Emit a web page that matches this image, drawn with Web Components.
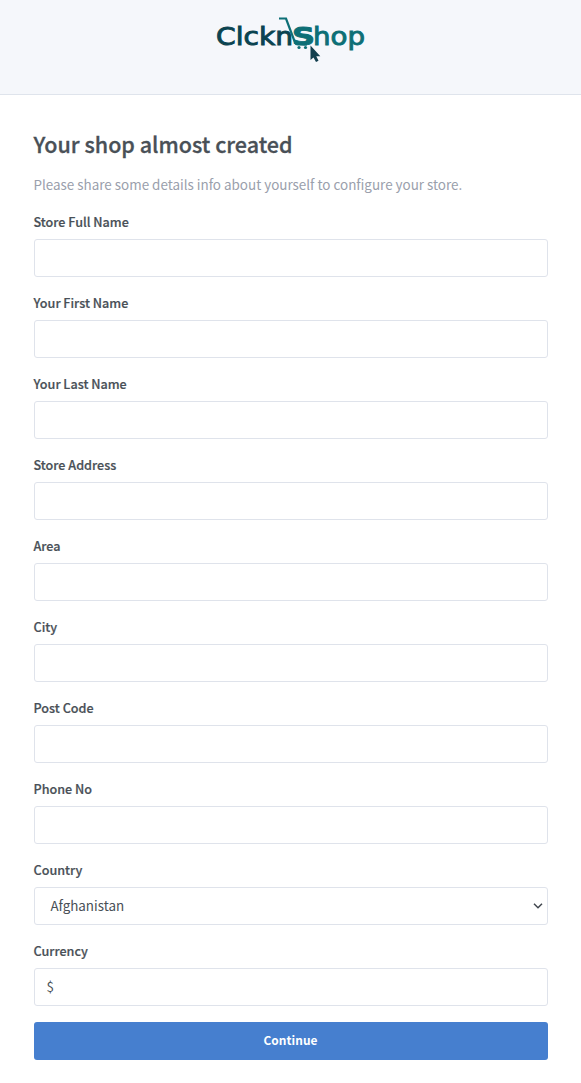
<!DOCTYPE html>
<html lang="en"><head><meta charset="utf-8"><title>ClcknShop</title>
<style>
body{margin:0;background:#fff;font-family:"Noto Sans CJK SC","Noto Sans",sans-serif;color:#495057}
</style></head><body>
<setup-page></setup-page>
<script>
const define=(name,html)=>customElements.define(name,class extends HTMLElement{
  constructor(){super();this.attachShadow({mode:'open'}).innerHTML=html;}
});
define('shop-logo',`<style>:host{display:block;width:150px;height:50px}svg{display:block;overflow:visible}text{font-family:"DejaVu Sans",sans-serif;font-size:24px;stroke-width:.9}</style>
<svg width="150" height="50" viewBox="216 14 150 50">
<g fill="#0a4350" stroke="#0a4350"><text x="216" y="45" textLength="77" lengthAdjust="spacingAndGlyphs">Clckn</text></g>
<g fill="#0d6f76" stroke="#0d6f76"><text x="292" y="45" font-size="25" font-weight="bold" textLength="23" lengthAdjust="spacingAndGlyphs">S</text><text x="313" y="45" textLength="52" lengthAdjust="spacingAndGlyphs">hop</text></g>
<path d="M279 18.500h7l9 24q.8 2 3 2h9" fill="none" stroke="#0d6f76" stroke-width="2.200"/>
<circle cx="299" cy="47.500" r="1.600" fill="#0d6f76"/><circle cx="305.500" cy="47.500" r="1.600" fill="#0d6f76"/>
<path d="M310.500 45.500v14.500l3-2.500 2.500 4.500 2.500-1.200-2.200-4.500h4z" fill="#123f4e"/>
</svg>`);
define('page-header',`<style>:host{display:flex;justify-content:center;box-sizing:border-box;height:95px;padding-top:14px;background:#f5f7fb;border-bottom:1px solid #dfe4ec}</style><slot></slot>`);
define('form-field',`<style>:host{display:block;margin-bottom:15px}
label{display:block;font-size:12.6px;font-weight:500;line-height:21px;height:21px;margin:0 0 7px -.5px;-webkit-text-stroke:.2px currentColor}
.box{box-sizing:border-box;height:38px;border:1px solid #dfe3eb;border-radius:3px;background:#fff;display:flex;align-items:center;padding:0 11.500px 2px;font-size:13.4px;line-height:24px}</style>
<label><slot name="label"></slot></label><div class="box"><slot></slot></div>`);
define('select-value',`<style>:host{display:flex;flex:1;justify-content:space-between;align-items:center;padding-left:4px;margin-right:-7.500px}svg{margin-top:2px}</style><span><slot></slot></span>
<svg width="10" height="6" viewBox="0 0 10 6"><path d="M1 .8l4 4 4-4" fill="none" stroke="#41474e" stroke-width="1.500"/></svg>`);
define('submit-button',`<style>:host{display:block;padding-top:1px}button{display:block;width:100%;height:38px;border:0;border-radius:3px;background:#467fcf;color:#fff;font:700 11.900px/22px "Noto Sans CJK SC",sans-serif;letter-spacing:.05px;padding:0 1px 2px 0}</style><button><slot></slot></button>`);
const names=['Store Full Name','Your First Name','Your Last Name','Store Address','Area','City','Post Code','Phone No'];
define('setup-page',`<style>:host{display:block}
main{padding:32px 33px 0 34px}
h1{margin:0;font-size:21.500px;line-height:34px;font-weight:500;height:34px;-webkit-text-stroke:.3px currentColor}
p{margin:11px 0 15px;font-size:13.430px;line-height:24px;color:#9aa0ac}
h1,p{margin-left:-.5px}
</style><page-header><shop-logo></shop-logo></page-header><main><h1><span>Your shop almost created</span></h1><p><span>Please share some details info about yourself to configure your store.</span></p>
${names.map(n=>`<form-field><span slot="label">${n}</span></form-field>`).join('')}
<form-field><span slot="label">Country</span><select-value>Afghanistan</select-value></form-field>
<form-field><span slot="label">Currency</span>$</form-field>
<submit-button>Continue</submit-button></main>`);
</script></body></html>
